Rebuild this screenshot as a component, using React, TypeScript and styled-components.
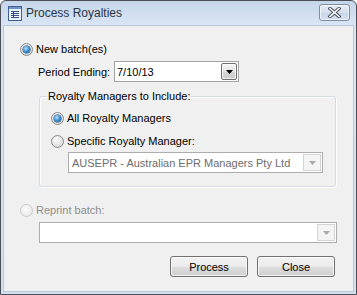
import React from "react";
import styled, { createGlobalStyle } from "styled-components";

const GlobalStyle = createGlobalStyle`
  html, body { margin: 0; padding: 0; background: #fff; }
  body { font-family: "Liberation Sans", Arial, sans-serif; font-size: 11px; color: #000; }
  * { box-sizing: border-box; }
`;

const Window = styled.div`
  width: 357px;
  height: 295px;
  border: 1px solid #4a4f57;
  border-radius: 6px 6px 0 0;
  background: linear-gradient(#c6d6ea, #d9e5f3 24px, #d4e0ee);
  display: flex;
  flex-direction: column;
  padding: 0 1px 1px 1px;
`;

const TitleBar = styled.div`
  height: 24px;
  display: flex;
  align-items: center;
  padding: 0 5px 0 6px;
`;

const TitleText = styled.span`
  font-family: "Liberation Sans", Arial, sans-serif;
  font-size: 12px;
  color: #2a3444;
  margin-left: 4px;
  flex: 1;
  padding-bottom: 1px;
`;

const CloseButton = styled.div`
  width: 31px;
  height: 17px;
  margin-top: -2px;
  border: 1px solid #7d8da4;
  border-radius: 3px;
  background: linear-gradient(#e6edf6, #d5e0ee 50%, #c7d5e7 51%, #d5e1ef);
  box-shadow: inset 0 0 0 1px rgba(255, 255, 255, 0.6);
  display: flex;
  align-items: center;
  justify-content: center;
`;

const Client = styled.div`
  flex: 1;
  margin: 0 1px 1px 1px;
  border: 1px solid #b9c9dc;
  background: #f0f0f0;
  display: flex;
  flex-direction: column;
  align-items: flex-start;
`;

const RadioRow = styled.label<{ $top: number; $left: number; $disabled?: boolean }>`
  display: flex;
  align-items: center;
  gap: 3px;
  height: 13px;
  margin-top: ${(p) => p.$top}px;
  margin-left: ${(p) => p.$left}px;
  color: ${(p) => (p.$disabled ? "#8d8d8d" : "#000")};
  line-height: 13px;
  white-space: nowrap;
`;

const Radio = styled.span<{ $checked?: boolean; $disabled?: boolean }>`
  position: relative;
  width: 13px;
  height: 13px;
  border-radius: 50%;
  border: 1px solid ${(p) => (p.$disabled ? "#c8c8c8" : "#8b8b8b")};
  background: ${(p) =>
    p.$disabled
      ? "radial-gradient(circle at 40% 35%, #fbfbfb, #e4e4e4)"
      : "radial-gradient(circle at 40% 35%, #ffffff, #dcdcdc 70%, #c8c8c8)"};
  flex-shrink: 0;

  &::after {
    content: "";
    display: ${(p) => (p.$checked ? "block" : "none")};
    position: absolute;
    left: 2px;
    top: 2px;
    width: 7px;
    height: 7px;
    border-radius: 50%;
    background: radial-gradient(circle at 40% 35%, #b9e2ff, #2e87cf 55%, #124d86);
    box-shadow: 0 0 0 0.5px #1a3f66;
  }
`;

const PeriodRow = styled.div`
  display: flex;
  align-items: center;
  margin-top: 5px;
  margin-left: 34px;
`;

const FieldLabel = styled.span`
  width: 76px;
  white-space: nowrap;
`;

const DateBox = styled.div`
  width: 125px;
  height: 21px;
  border: 1px solid #a3a3a3;
  background: #fff;
  display: flex;
  align-items: center;
  padding: 0 1px 0 2px;
`;

const DateText = styled.span`
  flex: 1;
`;

const DropButton = styled.div`
  width: 16px;
  height: 17px;
  border: 1px solid #6f6f6f;
  border-radius: 2px;
  background: linear-gradient(#f4f4f4, #e6e6e6 50%, #d6d6d6 51%, #cccccc);
  box-shadow: inset 0 0 0 1px rgba(255, 255, 255, 0.7);
  display: flex;
  align-items: center;
  justify-content: center;
`;

const Group = styled.div`
  position: relative;
  width: 297px;
  height: 91px;
  margin-top: 14px;
  margin-left: 35px;
  border: 1px solid #d2dbe3;
  border-radius: 3px;
  box-shadow: inset 1px 1px 0 #fff, 1px 1px 0 #fff;
  display: flex;
  flex-direction: column;
  align-items: flex-start;
`;

const Legend = styled.span`
  position: absolute;
  top: -7px;
  left: 7px;
  padding: 0 1px;
  background: #f0f0f0;
  line-height: 13px;
  white-space: nowrap;
`;

const Combo = styled.div<{ $top: number; $left: number; $width: number }>`
  width: ${(p) => p.$width}px;
  height: 21px;
  margin-top: ${(p) => p.$top}px;
  margin-left: ${(p) => p.$left}px;
  border: 1px solid #adadad;
  background: #fff;
  display: flex;
  align-items: stretch;
  color: #6d6d6d;
`;

const ComboText = styled.span`
  flex: 1;
  display: flex;
  align-items: center;
  padding-left: 3px;
  white-space: nowrap;
  overflow: hidden;
`;

const ComboArrow = styled.span`
  width: 18px;
  margin: 1px;
  border: 1px solid #d4d4d4;
  background: #f4f4f4;
  display: flex;
  align-items: center;
  justify-content: center;
`;

const ButtonRow = styled.div`
  display: flex;
  gap: 9px;
  margin-top: 13px;
  margin-left: 166px;
`;

const Button = styled.button`
  width: 78px;
  height: 21px;
  padding: 0;
  border: 1px solid #707070;
  border-radius: 3px;
  background: linear-gradient(#f2f2f2, #ebebeb 50%, #dddddd 51%, #cfcfcf);
  box-shadow: inset 0 0 0 1px rgba(255, 255, 255, 0.75);
  font-family: "Liberation Sans", Arial, sans-serif;
  font-size: 11px;
  color: #000;
`;

const AppIcon = () => (
  <svg width="14" height="15" viewBox="0 0 14 15">
    <rect x="0.5" y="0.5" width="13" height="14" fill="#eef4fc" stroke="#3f5f94" />
    <rect x="1" y="1" width="12" height="2" fill="#6f93c7" />
    <g stroke="#2f4f85" strokeWidth="1">
      <path d="M3 5.5h8M3 7.5h8M3 9.5h8M3 11.5h8" />
      <path d="M5.5 5v7" />
    </g>
  </svg>
);

const CloseGlyph = () => (
  <svg width="13" height="11" viewBox="0 0 13 11">
    <path d="M2 1.5l9 8M11 1.5l-9 8" stroke="#3b4656" strokeWidth="3.4" strokeLinecap="square" />
    <path d="M2 1.5l9 8M11 1.5l-9 8" stroke="#ffffff" strokeWidth="1.6" strokeLinecap="square" />
  </svg>
);

const Triangle = ({ color }: { color: string }) => (
  <svg width="7" height="4" viewBox="0 0 7 4">
    <path d="M0 0h7L3.5 4z" fill={color} />
  </svg>
);

const App = () => {
  return (
    <>
      <GlobalStyle />
      <Window>
        <TitleBar>
          <AppIcon />
          <TitleText>Process Royalties</TitleText>
          <CloseButton>
            <CloseGlyph />
          </CloseButton>
        </TitleBar>
        <Client>
          <RadioRow $top={17} $left={16}>
            <Radio $checked />
            New batch(es)
          </RadioRow>

          <PeriodRow>
            <FieldLabel>Period Ending:</FieldLabel>
            <DateBox>
              <DateText>7/10/13</DateText>
              <DropButton>
                <Triangle color="#000" />
              </DropButton>
            </DateBox>
          </PeriodRow>

          <Group>
            <Legend>Royalty Managers to Include:</Legend>
            <RadioRow $top={15} $left={11}>
              <Radio $checked />
              All Royalty Managers
            </RadioRow>
            <RadioRow $top={10} $left={11}>
              <Radio />
              Specific Royalty Manager:
            </RadioRow>
            <Combo $top={4} $left={28} $width={255}>
              <ComboText>AUSEPR - Australian EPR Managers Pty Ltd</ComboText>
              <ComboArrow>
                <Triangle color="#a9a9a9" />
              </ComboArrow>
            </Combo>
          </Group>

          <RadioRow $top={17} $left={16} $disabled>
            <Radio $disabled />
            Reprint batch:
          </RadioRow>
          <Combo $top={5} $left={35} $width={298}>
            <ComboText />
            <ComboArrow>
              <Triangle color="#a9a9a9" />
            </ComboArrow>
          </Combo>

          <ButtonRow>
            <Button>Process</Button>
            <Button>Close</Button>
          </ButtonRow>
        </Client>
      </Window>
    </>
  );
};

export default App;
